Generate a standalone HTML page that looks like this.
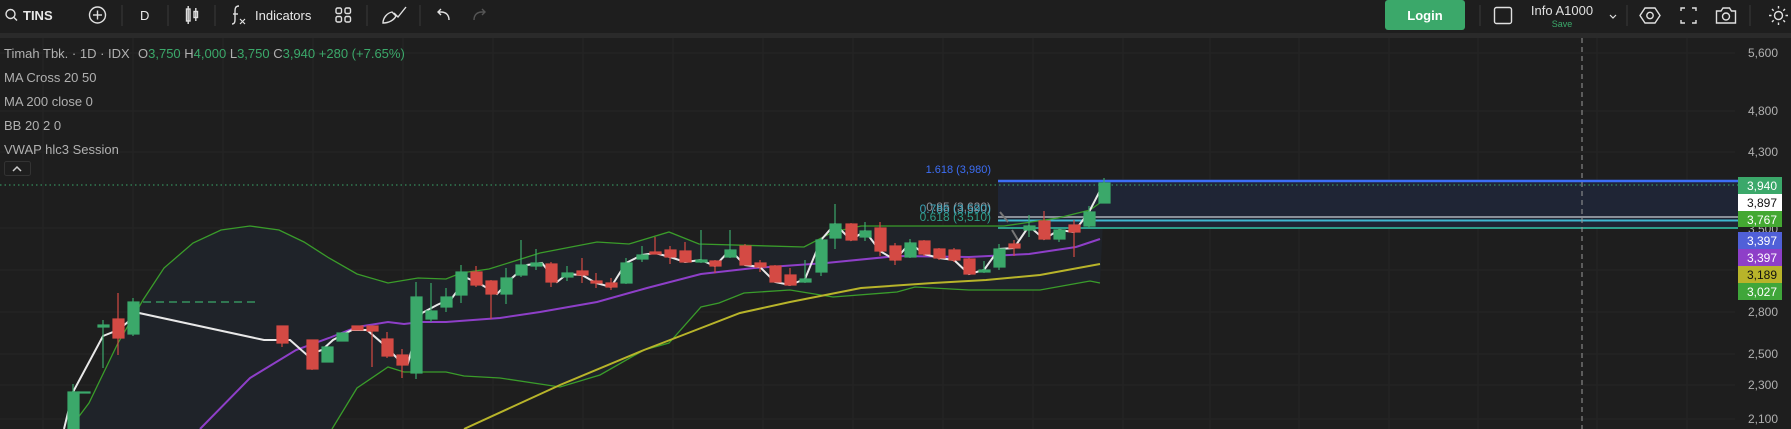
<!DOCTYPE html>
<html><head><meta charset="utf-8"><style>
html,body{margin:0;padding:0;background:#1e1e1e;width:1791px;height:429px;overflow:hidden;font-family:"Liberation Sans",sans-serif}
</style></head><body>
<svg width="1791" height="429" style="position:absolute;left:0;top:0" xmlns="http://www.w3.org/2000/svg" font-family="Liberation Sans, sans-serif">
<rect x="0" y="0" width="1791" height="429" fill="#1e1e1e"/>
<rect x="0" y="33" width="1791" height="5" fill="#2a2a2a"/>
<g stroke="#252525" stroke-width="1">
<line x1="43" y1="38" x2="43" y2="429"/><line x1="133" y1="38" x2="133" y2="429"/><line x1="223" y1="38" x2="223" y2="429"/><line x1="313" y1="38" x2="313" y2="429"/><line x1="403" y1="38" x2="403" y2="429"/><line x1="493" y1="38" x2="493" y2="429"/><line x1="583" y1="38" x2="583" y2="429"/><line x1="673" y1="38" x2="673" y2="429"/><line x1="763" y1="38" x2="763" y2="429"/><line x1="853" y1="38" x2="853" y2="429"/><line x1="943" y1="38" x2="943" y2="429"/><line x1="1033" y1="38" x2="1033" y2="429"/><line x1="1123" y1="38" x2="1123" y2="429"/><line x1="1210" y1="38" x2="1210" y2="429"/><line x1="1299" y1="38" x2="1299" y2="429"/><line x1="1389" y1="38" x2="1389" y2="429"/><line x1="1478" y1="38" x2="1478" y2="429"/><line x1="1597" y1="38" x2="1597" y2="429"/><line x1="1687" y1="38" x2="1687" y2="429"/>
<line x1="0" y1="53" x2="1735" y2="53"/><line x1="0" y1="111" x2="1735" y2="111"/><line x1="0" y1="152" x2="1735" y2="152"/><line x1="0" y1="228" x2="1735" y2="228"/><line x1="0" y1="270" x2="1735" y2="270"/><line x1="0" y1="312" x2="1735" y2="312"/><line x1="0" y1="354" x2="1735" y2="354"/><line x1="0" y1="385" x2="1735" y2="385"/><line x1="0" y1="419" x2="1735" y2="419"/>
</g>
<polygon fill="#1f2329" points="71,427 89,403 118,343 143,300 164,268 193,243 221,230 250,226 279,230 304,242 329,258 357,274 388,283 418,278 446,279 461,273 489,269 521,259 540,253 597,242 629,244 669,232 699,244 804,247 833,232 861,226 1004,226 1058,218 1090,210 1104,200 1100,283 1090,281 1040,290 969,290 915,287 897,292 833,297 790,290 744,293 719,303 701,307 669,343 644,350 600,375 560,387 500,378 464,376 446,372 404,372 388,367 357,388 332,429 71,429"/>
<rect x="998" y="181" width="740" height="47" fill="#1f2535"/>
<line x1="998" y1="181" x2="1738" y2="181" stroke="#3d6ef5" stroke-width="2.5"/>
<line x1="998" y1="217" x2="1738" y2="217" stroke="#8a8f98" stroke-width="2"/>
<line x1="998" y1="220.5" x2="1738" y2="220.5" stroke="#3fb8d0" stroke-width="2"/>
<line x1="998" y1="228" x2="1738" y2="228" stroke="#2e9e8a" stroke-width="2"/>
<line x1="0" y1="185" x2="1738" y2="185" stroke="#3ba86a" stroke-width="1" stroke-dasharray="1.5,3"/>
<line x1="1582" y1="38" x2="1582" y2="429" stroke="#9a9a9a" stroke-width="1" stroke-dasharray="5,4"/>
<path d="M1000 212 L1008 222 M1012 230 L1018 240" stroke="#777" stroke-width="2"/>
<text x="991" y="173" font-size="11" fill="#3d6ef5" text-anchor="end">1.618 (3,980)</text>
<text x="991" y="211" font-size="12" fill="#8a8f98" text-anchor="end">0.85 (3,620)</text>
<text x="991" y="213" font-size="12" fill="#3fb8d0" text-anchor="end" opacity="0.85">0.786 (3,590)</text>
<text x="991" y="221" font-size="12" fill="#2e9e8a" text-anchor="end">0.618 (3,510)</text>
<polyline fill="none" stroke="#3a9c2a" stroke-width="1.3" points="71,427 89,403 118,343 143,300 164,268 193,243 221,230 250,226 279,230 304,242 329,258 357,274 388,283 418,278 446,279 461,273 489,269 521,259 540,253 597,242 629,244 669,232 699,244 804,247 833,232 861,226 1004,226 1058,218 1090,210 1104,200"/>
<polyline fill="none" stroke="#3a9c2a" stroke-width="1.3" points="332,429 357,388 388,367 404,372 446,372 464,376 500,378 560,387 600,375 644,350 669,343 701,307 719,303 744,293 790,290 833,297 897,292 915,287 969,290 1040,290 1090,281 1100,283"/>
<polyline fill="none" stroke="#8e3fc8" stroke-width="2" points="200,429 250,378 296,350 329,338 357,327 388,322 404,324 421,322 446,322 500,318 540,312 597,302 647,288 701,274 754,268 826,263 897,256 969,257 1029,254 1076,247 1100,239"/>
<polyline fill="none" stroke="#b8b42a" stroke-width="2" points="464,429 560,385 644,350 683,335 740,313 790,302 861,288 933,283 986,280 1040,275 1100,264"/>
<line x1="143" y1="302" x2="257" y2="302" stroke="#3ba86a" stroke-width="1.3" stroke-dasharray="8,5"/>
<polyline fill="none" stroke="#e8e8e8" stroke-width="2" points="64,429 73,392 103,336 118,330 139,313 264,340 290,340 307,355 322,350 333,340 352,330 367,330 382,343 397,358 408,363 422,313 437,305 452,298 467,278 482,285 497,294 512,278 527,265 542,263 557,282 567,274 582,275 596,283 611,287 626,263 642,255 655,253 670,257 685,262 701,260 715,266 730,250 745,265 760,267 775,282 790,285 805,279 821,240 835,224 851,240 865,231 880,251 895,260 910,243 924,254 939,258 954,260 969,274 984,270 999,249 1014,248 1029,226 1044,239 1059,230 1074,232 1089,212 1104,183"/>
<g stroke-width="1.2">
<g fill="#3ba86a" stroke="#3ba86a">
<line x1="73" y1="384" x2="73" y2="429"/><rect x="68" y="392" width="11" height="37"/>
<line x1="103" y1="320" x2="103" y2="368"/><rect x="98" y="325" width="11" height="2"/>
<line x1="133" y1="298" x2="133" y2="336"/><rect x="128" y="302" width="11" height="32"/>
<rect x="78" y="392" width="12" height="1"/>
<rect x="322" y="347" width="11" height="15"/>
<rect x="337" y="333" width="11" height="8"/>
<line x1="416" y1="282" x2="416" y2="379"/><rect x="411" y="297" width="11" height="76"/>
<line x1="431" y1="283" x2="431" y2="322"/><rect x="426" y="311" width="11" height="8"/>
<line x1="446" y1="288" x2="446" y2="312"/><rect x="441" y="297" width="11" height="10"/>
<line x1="461" y1="265" x2="461" y2="303"/><rect x="456" y="272" width="11" height="23"/>
<line x1="506" y1="268" x2="506" y2="304"/><rect x="501" y="278" width="11" height="16"/>
<line x1="521" y1="240" x2="521" y2="277"/><rect x="516" y="265" width="11" height="10"/>
<line x1="536" y1="249" x2="536" y2="270"/><rect x="531" y="263" width="11" height="3"/>
<line x1="567" y1="266" x2="567" y2="281"/><rect x="562" y="273" width="11" height="4"/>
<line x1="626" y1="258" x2="626" y2="284"/><rect x="621" y="263" width="11" height="20"/>
<line x1="642" y1="246" x2="642" y2="262"/><rect x="637" y="255" width="11" height="4"/>
<line x1="701" y1="230" x2="701" y2="263"/><rect x="696" y="260" width="11" height="2"/>
<line x1="730" y1="230" x2="730" y2="258"/><rect x="725" y="250" width="11" height="7"/>
<line x1="805" y1="260" x2="805" y2="283"/><rect x="800" y="279" width="11" height="3"/>
<line x1="821" y1="238" x2="821" y2="276"/><rect x="816" y="240" width="11" height="32"/>
<line x1="835" y1="204" x2="835" y2="249"/><rect x="830" y="224" width="11" height="14"/>
<line x1="865" y1="222" x2="865" y2="241"/><rect x="860" y="231" width="11" height="6"/>
<line x1="910" y1="239" x2="910" y2="258"/><rect x="905" y="243" width="11" height="14"/>
<line x1="984" y1="261" x2="984" y2="273"/><rect x="979" y="270" width="11" height="2"/>
<line x1="999" y1="244" x2="999" y2="270"/><rect x="994" y="249" width="11" height="18"/>
<line x1="1029" y1="215" x2="1029" y2="237"/><rect x="1024" y="226" width="11" height="4"/>
<line x1="1059" y1="228" x2="1059" y2="242"/><rect x="1054" y="230" width="11" height="9"/>
<line x1="1089" y1="206" x2="1089" y2="228"/><rect x="1084" y="212" width="11" height="14"/>
<line x1="1104" y1="178" x2="1104" y2="203"/><rect x="1099" y="183" width="11" height="20"/>
</g>
<g fill="#d44a44" stroke="#d44a44">
<line x1="118" y1="293" x2="118" y2="355"/><rect x="113" y="319" width="11" height="19"/>
<line x1="282" y1="326" x2="282" y2="347"/><rect x="277" y="326" width="11" height="17"/>
<line x1="312" y1="340" x2="312" y2="370"/><rect x="307" y="340" width="11" height="29"/>
<rect x="352" y="326" width="11" height="4"/>
<line x1="372" y1="326" x2="372" y2="367"/><rect x="367" y="326" width="11" height="5"/>
<line x1="387" y1="332" x2="387" y2="358"/><rect x="382" y="339" width="11" height="17"/>
<line x1="402" y1="349" x2="402" y2="378"/><rect x="397" y="355" width="11" height="10"/>
<line x1="476" y1="266" x2="476" y2="287"/><rect x="471" y="272" width="11" height="13"/>
<line x1="491" y1="280" x2="491" y2="319"/><rect x="486" y="281" width="11" height="13"/>
<line x1="551" y1="262" x2="551" y2="287"/><rect x="546" y="264" width="11" height="18"/>
<line x1="582" y1="258" x2="582" y2="283"/><rect x="577" y="271" width="11" height="4"/>
<line x1="596" y1="273" x2="596" y2="288"/><rect x="591" y="281" width="11" height="2"/>
<line x1="611" y1="278" x2="611" y2="290"/><rect x="606" y="283" width="11" height="4"/>
<line x1="655" y1="237" x2="655" y2="253"/><rect x="650" y="252" width="11" height="2"/>
<line x1="670" y1="246" x2="670" y2="264"/><rect x="665" y="250" width="11" height="7"/>
<line x1="685" y1="242" x2="685" y2="262"/><rect x="680" y="251" width="11" height="11"/>
<line x1="715" y1="260" x2="715" y2="273"/><rect x="710" y="261" width="11" height="5"/>
<line x1="745" y1="244" x2="745" y2="265"/><rect x="740" y="246" width="11" height="19"/>
<line x1="760" y1="260" x2="760" y2="272"/><rect x="755" y="263" width="11" height="4"/>
<line x1="775" y1="265" x2="775" y2="282"/><rect x="770" y="266" width="11" height="16"/>
<line x1="790" y1="268" x2="790" y2="286"/><rect x="785" y="275" width="11" height="10"/>
<line x1="851" y1="223" x2="851" y2="241"/><rect x="846" y="224" width="11" height="16"/>
<line x1="880" y1="222" x2="880" y2="256"/><rect x="875" y="228" width="11" height="23"/>
<line x1="895" y1="243" x2="895" y2="265"/><rect x="890" y="246" width="11" height="14"/>
<line x1="924" y1="240" x2="924" y2="256"/><rect x="919" y="241" width="11" height="13"/>
<line x1="939" y1="248" x2="939" y2="260"/><rect x="934" y="249" width="11" height="9"/>
<line x1="954" y1="248" x2="954" y2="262"/><rect x="949" y="250" width="11" height="10"/>
<line x1="969" y1="258" x2="969" y2="274"/><rect x="964" y="259" width="11" height="15"/>
<line x1="1014" y1="240" x2="1014" y2="256"/><rect x="1009" y="244" width="11" height="4"/>
<line x1="1044" y1="211" x2="1044" y2="240"/><rect x="1039" y="221" width="11" height="18"/>
<line x1="1074" y1="220" x2="1074" y2="257"/><rect x="1069" y="225" width="11" height="7"/>
</g>
</g>
<g font-size="12" fill="#b0b0b0" text-anchor="end">
<text x="1778" y="57">5,600</text><text x="1778" y="115">4,800</text><text x="1778" y="156">4,300</text>
<text x="1778" y="233">3,500</text>
<text x="1778" y="316">2,800</text><text x="1778" y="358">2,500</text><text x="1778" y="389">2,300</text><text x="1778" y="423">2,100</text>
</g>
<g font-size="12" text-anchor="end">
<rect x="1738" y="177" width="44" height="17" fill="#3ba86a"/><text x="1777" y="190" fill="#fff">3,940</text>
<rect x="1738" y="194" width="44" height="17" fill="#ffffff"/><text x="1777" y="207" fill="#111">3,897</text>
<rect x="1738" y="211" width="44" height="16" fill="#44a832"/><text x="1777" y="224" fill="#fff">3,767</text>
<rect x="1738" y="232" width="44" height="17" fill="#5060d8"/><text x="1777" y="245" fill="#fff">3,397</text>
<rect x="1738" y="249" width="44" height="17" fill="#8e3fc8"/><text x="1777" y="262" fill="#fff">3,397</text>
<rect x="1738" y="266" width="44" height="17" fill="#b8b42a"/><text x="1777" y="279" fill="#111">3,189</text>
<rect x="1738" y="283" width="44" height="17" fill="#3fa63a"/><text x="1777" y="296" fill="#fff">3,027</text>
</g>
<rect x="4.5" y="161.5" width="26" height="14" rx="2" fill="#1e1e1e" stroke="#333"/>
<path d="M13 171 L17 167 L21 171" fill="none" stroke="#ccc" stroke-width="1.5"/>
<g fill="none" stroke="#e0e0e0" stroke-width="1.4">
<circle cx="10.5" cy="14" r="4.5"/><line x1="14" y1="17.5" x2="17" y2="20.5"/>
<circle cx="97.5" cy="15" r="8"/><line x1="93" y1="15" x2="102" y2="15"/><line x1="97.5" y1="10.5" x2="97.5" y2="19.5"/>
<rect x="186.5" y="9" width="3.5" height="12"/><line x1="188.2" y1="6" x2="188.2" y2="24"/><rect x="194" y="11.5" width="3.5" height="6"/><line x1="195.8" y1="8" x2="195.8" y2="21"/>
<path d="M239 6 C235 6 235 9 235 12 L235 20 C235 23 234 24 232 24"/><line x1="233" y1="14" x2="238" y2="14"/>
<path d="M240 19 L245 24 M245 19 L240 24" stroke-width="1.2"/>
<rect x="336" y="8" width="5.5" height="5.5" rx="1.5"/><rect x="345" y="8" width="5.5" height="5.5" rx="1.5"/><rect x="336" y="16.5" width="5.5" height="5.5" rx="1.5"/><rect x="345" y="16.5" width="5.5" height="5.5" rx="1.5"/>
<path d="M383 23 C383 18 387 13 392 12 L396 16 C394 20 389 23 383 23 Z M394 13 L398 17 L406 7"/>
<path d="M449 20 C449 15 446 12 441 12 L438 12 M441 9 L438 12 L441 15"/>
<path d="M474 20 C474 15 477 12 482 12 L485 12 M482 9 L485 12 L482 15" stroke="#555"/>
<rect x="1494.5" y="7.5" width="17" height="16" rx="2"/>
<path d="M1610 15 L1613 18 L1616 15" stroke-width="1.2"/>
<polygon points="1645,8 1655,8 1660,15.5 1655,23 1645,23 1640,15.5"/><circle cx="1650" cy="15.5" r="3.2"/>
<path d="M1681 11 V8 H1685 M1692 8 H1696 V11 M1696 20 V23 H1692 M1685 23 H1681 V20"/>
<path d="M1716.5 11 H1721 L1723 8 H1729.5 L1731.5 11 H1735.5 V23 H1716.5 Z"/><circle cx="1726" cy="16.5" r="3.5"/>
<circle cx="1778.5" cy="15.5" r="4"/>
<path d="M1778.5 6 V8.5 M1778.5 22.5 V25 M1769 15.5 H1771.5 M1785.5 15.5 H1788 M1772 9 L1773.7 10.7 M1783.3 20.3 L1785 22 M1772 22 L1773.7 20.3 M1783.3 10.7 L1785 9"/>
</g>
<g stroke="#3a3a3a" stroke-width="1">
<line x1="122" y1="5" x2="122" y2="26"/><line x1="168" y1="5" x2="168" y2="26"/><line x1="215" y1="5" x2="215" y2="26"/><line x1="367" y1="5" x2="367" y2="26"/><line x1="420" y1="5" x2="420" y2="26"/>
<line x1="1480" y1="5" x2="1480" y2="26"/><line x1="1627" y1="5" x2="1627" y2="26"/><line x1="1750" y1="5" x2="1750" y2="26"/>
</g>
<rect x="1385" y="0" width="80" height="30" rx="3" fill="#3ba86a"/>
<text x="1425" y="20" font-size="13" font-weight="bold" fill="#fff" text-anchor="middle">Login</text>
<text x="1562" y="15" font-size="13" fill="#e0e0e0" text-anchor="middle">Info A1000</text>
<text x="1562" y="27" font-size="9" fill="#3ba86a" text-anchor="middle">Save</text>
<text x="23" y="20" font-size="13" font-weight="bold" fill="#e8e8e8">TINS</text>
<text x="140" y="20" font-size="13" fill="#e8e8e8">D</text>
<text x="255" y="20" font-size="13" fill="#e8e8e8">Indicators</text>
<g font-size="13" fill="#b0b0b0">
<text x="4" y="58">Timah Tbk. · 1D · IDX</text>
<text x="138" y="58">O<tspan fill="#3ba86a">3,750</tspan>  H<tspan fill="#3ba86a">4,000</tspan>  L<tspan fill="#3ba86a">3,750</tspan>  C<tspan fill="#3ba86a">3,940</tspan>  <tspan fill="#3ba86a">+280 (+7.65%)</tspan></text>
<text x="4" y="82">MA Cross 20 50</text>
<text x="4" y="106">MA 200 close 0</text>
<text x="4" y="130">BB 20 2 0</text>
<text x="4" y="154">VWAP hlc3 Session</text>
</g>
</svg>
</body></html>
